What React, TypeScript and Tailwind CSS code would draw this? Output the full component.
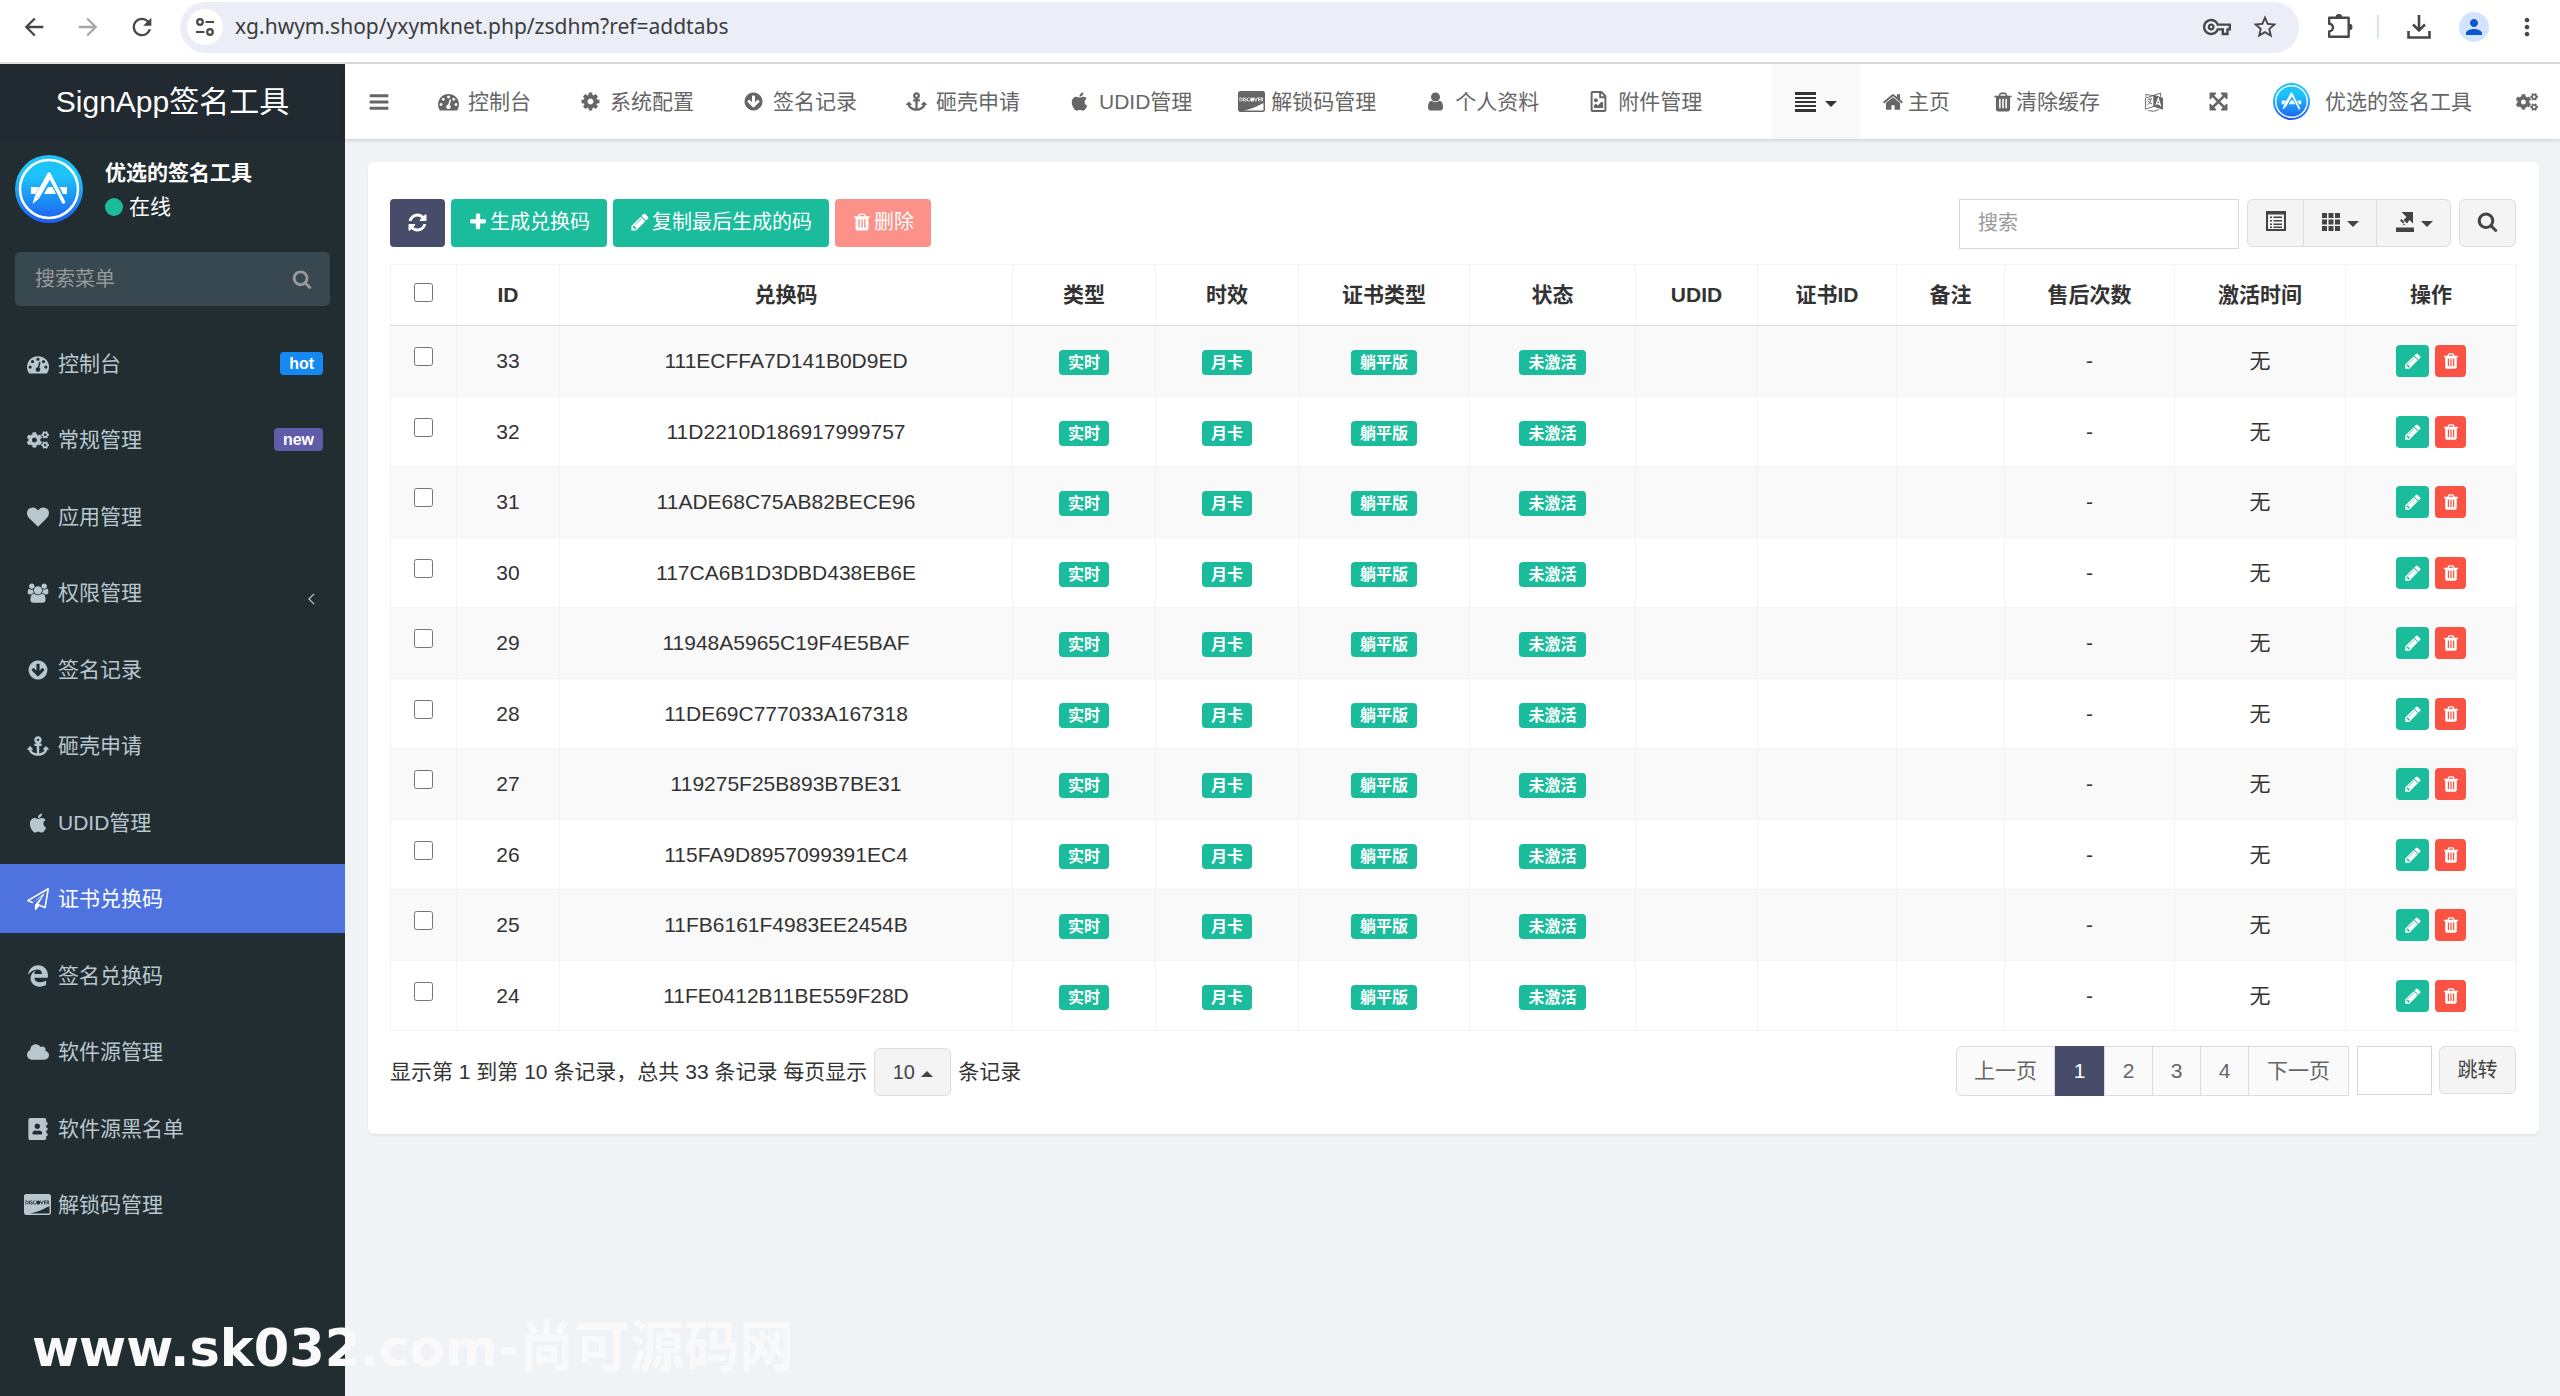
import React from 'react';
import { FaAnchor, FaApple, FaCloud, FaAddressBook, FaCcDiscover, FaRegFileImage, FaCogs } from 'react-icons/fa';
import { FaEdgeLegacy } from 'react-icons/fa6';
import { MdArrowBack, MdArrowForward, MdRefresh, MdStarBorder, MdMoreVert, MdPerson, MdOutlineVpnKey } from 'react-icons/md';

interface IconProps {
  className?: string;
}

type IconType = React.ComponentType<IconProps>;

const glyph = (path: string, viewBox = '0 0 1792 1792'): IconType => {
  const Glyph: React.FC<IconProps> = ({ className }) => (
    <svg viewBox={viewBox} fill="currentColor" className={className} aria-hidden="true">
      <path d={path} />
    </svg>
  );
  return Glyph;
};

const PencilIcon = glyph('M491 1536l91-91-235-235-91 91v107h128v128h107zm523-928q0-22-22-22-10 0-17 7l-542 542q-7 7-7 17 0 22 22 22 10 0 17-7l542-542q7-7 7-17zm-54-192l416 416-832 832h-416v-416zm683 96q0 53-37 90l-166 166-416-416 166-165q36-38 90-38 53 0 91 38l235 234q37 39 37 91z');
const TrashIcon = glyph('M704 1376v-704q0-14-9-23t-23-9h-64q-14 0-23 9t-9 23v704q0 14 9 23t23 9h64q14 0 23-9t9-23zm256 0v-704q0-14-9-23t-23-9h-64q-14 0-23 9t-9 23v704q0 14 9 23t23 9h64q14 0 23-9t9-23zm256 0v-704q0-14-9-23t-23-9h-64q-14 0-23 9t-9 23v704q0 14 9 23t23 9h64q14 0 23-9t9-23zm-544-992h448l-48-117q-7-9-17-11h-317q-10 2-17 11zm928 32v64q0 14-9 23t-23 9h-96v948q0 83-47 143.5t-113 60.5h-832q-66 0-113-58.5t-47-141.5v-952h-96q-14 0-23-9t-9-23v-64q0-14 9-23t23-9h309l70-167q15-37 54-63t79-26h320q40 0 79 26t54 63l70 167h309q14 0 23 9t9 23z');
const RefreshIcon = glyph('M1639 1056q0 5-1 7-64 268-268 434.5t-478 166.5q-146 0-282.5-55t-243.5-157l-129 129q-19 19-45 19t-45-19-19-45v-448q0-26 19-45t45-19h448q26 0 45 19t19 45-19 45l-137 137q71 66 161 102t187 36q134 0 250-65t186-179q11-17 53-117 8-23 30-23h192q13 0 22.5 9.5t9.5 22.5zm25-800v448q0 26-19 45t-45 19h-448q-26 0-45-19t-19-45 19-45l138-138q-148-137-349-137-134 0-250 65t-186 179q-11 17-53 117-8 23-30 23h-199q-13 0-22.5-9.5t-9.5-22.5v-7q65-268 270-434.5t480-166.5q146 0 284 55.5t245 156.5l130-129q19-19 45-19t45 19 19 45z');
const PlusIcon = glyph('M1600 736v192q0 40-28 68t-68 28h-416v416q0 40-28 68t-68 28h-192q-40 0-68-28t-28-68v-416h-416q-40 0-68-28t-28-68v-192q0-40 28-68t68-28h416v-416q0-40 28-68t68-28h192q40 0 68 28t28 68v416h416q40 0 68 28t28 68z');
const SearchIcon = glyph('M1216 832q0-185-131.5-316.5t-316.5-131.5-316.5 131.5-131.5 316.5 131.5 316.5 316.5 131.5 316.5-131.5 131.5-316.5zm512 832q0 52-38 90t-90 38q-54 0-90-38l-343-342q-179 124-399 124-143 0-273.5-55.5t-225-150-150-225-55.5-273.5 55.5-273.5 150-225 225-150 273.5-55.5 273.5 55.5 225 150 150 225 55.5 273.5q0 220-124 399l343 343q37 37 37 90z');
const BarsIcon = glyph('M1664 1344v128q0 26-19 45t-45 19h-1408q-26 0-45-19t-19-45v-128q0-26 19-45t45-19h1408q26 0 45 19t19 45zm0-512v128q0 26-19 45t-45 19h-1408q-26 0-45-19t-19-45v-128q0-26 19-45t45-19h1408q26 0 45 19t19 45zm0-512v128q0 26-19 45t-45 19h-1408q-26 0-45-19t-19-45v-128q0-26 19-45t45-19h1408q26 0 45 19t19 45z');
const HomeIcon = glyph('M1472 992v480q0 26-19 45t-45 19h-384v-384h-256v384h-384q-26 0-45-19t-19-45v-480q0-1 .5-3t.5-3l575-474 575 474q1 2 1 6zm223-69l-62 74q-8 9-21 11h-3q-13 0-21-7l-692-577-692 577q-12 8-24 7-13-2-21-11l-62-74q-8-10-7-23.5t11-21.5l719-599q32-26 76-26t76 26l244 204v-195q0-14 9-23t23-9h192q14 0 23 9t9 23v408l219 182q10 8 11 21.5t-7 23.5z');
const CogIcon = glyph('M1152 896q0-106-75-181t-181-75-181 75-75 181 75 181 181 75 181-75 75-181zm512-109v222q0 12-8 23t-20 13l-185 28q-19 54-39 91 35 50 107 138 10 12 10 25t-9 23q-27 37-99 108t-94 71q-12 0-26-9l-138-108q-44 23-91 38-16 136-29 186-7 28-36 28h-222q-14 0-24.5-8.5t-11.5-21.5l-28-184q-49-16-90-37l-141 107q-10 9-25 9-14 0-25-11-126-114-165-168-7-10-7-23 0-12 8-23 15-21 51-66.5t54-70.5q-27-50-41-99l-183-27q-13-2-21-12.5t-8-23.5v-222q0-12 8-23t19-13l186-28q14-46 39-92-40-57-107-138-10-12-10-24 0-10 9-23 26-36 98.5-107.5t94.5-71.5q13 0 26 10l138 107q44-23 91-38 16-136 29-186 7-28 36-28h222q14 0 24.5 8.5t11.5 21.5l28 184q49 16 90 37l142-107q9-9 24-9 13 0 25 10 129 119 165 170 7 8 7 22 0 12-8 23-15 21-51 66.5t-54 70.5q26 50 41 98l183 28q13 2 21 12.5t8 23.5z');
const DashboardIcon = glyph('M384 1152q0-53-37.5-90.5t-90.5-37.5-90.5 37.5-37.5 90.5 37.5 90.5 90.5 37.5 90.5-37.5 37.5-90.5zm192-448q0-53-37.5-90.5t-90.5-37.5-90.5 37.5-37.5 90.5 37.5 90.5 90.5 37.5 90.5-37.5 37.5-90.5zm428 481l101-382q6-26-7.5-48.5t-38.5-29.5-48 6.5-30 39.5l-101 382q-60 5-107 43.5t-63 98.5q-20 77 20 146t117 89 146-20 89-117q16-60-6-117t-72-91zm660-33q0-53-37.5-90.5t-90.5-37.5-90.5 37.5-37.5 90.5 37.5 90.5 90.5 37.5 90.5-37.5 37.5-90.5zm-640-640q0-53-37.5-90.5t-90.5-37.5-90.5 37.5-37.5 90.5 37.5 90.5 90.5 37.5 90.5-37.5 37.5-90.5zm448 192q0-53-37.5-90.5t-90.5-37.5-90.5 37.5-37.5 90.5 37.5 90.5 90.5 37.5 90.5-37.5 37.5-90.5zm320 448q0 261-141 483-19 29-54 29h-1402q-35 0-54-29-141-221-141-483 0-182 71-348t191-286 286-191 348-71 348 71 286 191 191 286 71 348z');
const HeartIcon = glyph('M896 1664q-26 0-44-18l-624-602q-10-8-27.5-26t-55.5-65.5-68-97.5-53.5-121-23.5-138q0-220 127-344t351-124q62 0 126.5 21.5t120 58 95.5 68.5 76 68q36-36 76-68t95.5-68.5 120-58 126.5-21.5q224 0 351 124t127 344q0 221-229 450l-623 600q-18 18-44 18z');
const UsersIcon = glyph('M657 896q-162 5-265 128h-134q-82 0-138-40.5t-56-118.5q0-353 124-353 6 0 43.5 21t97.5 42.5 119 21.5q67 0 133-23-5 37-5 66 0 159 90 294zm1071 637q0 120-73 189.5t-194 69.5h-874q-121 0-194-69.5t-73-189.5q0-53 3.5-103.5t14-109 26.5-108.5 43-97.5 62-81 85.5-53.5 111.5-20q10 0 43 21.5t73 48 107 48 135 21.5 135-21.5 107-48 73-48 43-21.5q61 0 111.5 20t85.5 53.5 62 81 43 97.5 26.5 108.5 14 109 3.5 103.5zm-1024-1277q0 106-75 181t-181 75-181-75-75-181 75-181 181-75 181 75 75 181zm704 384q0 159-112.5 271.5t-271.5 112.5-271.5-112.5-112.5-271.5 112.5-271.5 271.5-112.5 271.5 112.5 112.5 271.5zm576 225q0 78-56 118.5t-138 40.5h-134q-103-123-265-128 90-135 90-294 0-29-5-66 66 23 133 23 59 0 119-21.5t97.5-42.5 43.5-21q124 0 124 353zm-128-609q0 106-75 181t-181 75-181-75-75-181 75-181 181-75 181 75 75 181z', '0 0 2048 1792');
const ArrowDownIcon = glyph('M1412 897q0-27-18-45l-91-91q-18-18-45-18t-45 18l-189 189v-502q0-26-19-45t-45-19h-128q-26 0-45 19t-19 45v502l-189-189q-19-19-45-19t-45 19l-91 91q-18 18-18 45t18 45l362 362 91 91q18 18 45 18t45-18l91-91 362-362q18-18 18-45zm252-1q0 209-103 385.5t-279.5 279.5-385.5 103-385.5-103-279.5-279.5-103-385.5 103-385.5 279.5-279.5 385.5-103 385.5 103 279.5 279.5 103 385.5z');
const PlaneIcon = glyph('M1764 11q33 24 27 64l-256 1536q-5 29-32 45-14 8-31 8-11 0-24-5l-453-185-242 295q-18 23-49 23-13 0-22-4-19-7-30.5-23.5t-11.5-36.5v-349l864-1059-1069 925-395-162q-37-14-40-55-2-40 32-59l1664-960q15-9 32-9 20 0 36 11zm-342 1499l221-1323-1434 827 336 137 863-639-478 797z');
const UserIcon = glyph('M1536 1399q0 109-62.5 187t-150.5 78h-854q-88 0-150.5-78t-62.5-187q0-85 8.5-160.5t31.5-152 58.5-131 94-89 134.5-34.5q131 128 313 128t313-128q76 0 134.5 34.5t94 89 58.5 131 31.5 152 8.5 160.5zm-256-887q0 159-112.5 271.5t-271.5 112.5-271.5-112.5-112.5-271.5 112.5-271.5 271.5-112.5 271.5 112.5 112.5 271.5z');
const ExpandIcon = glyph('M1411 541l-355 355 355 355 144-144q29-31 70-14 39 17 39 59v448q0 26-19 45t-45 19h-448q-42 0-59-40-17-39 14-69l144-144-355-355-355 355 144 144q31 30 14 69-17 40-59 40h-448q-26 0-45-19t-19-45v-448q0-42 40-59 39-17 69 14l144 144 355-355-355-355-144 144q-19 19-45 19-12 0-24-5-40-17-40-59v-448q0-26 19-45t45-19h448q42 0 59 40 17 39-14 69l-144 144 355 355 355-355-144-144q-31-30-14-69 17-40 59-40h448q26 0 45 19t19 45v448q0 42-39 59-13 5-25 5-26 0-45-19z');

const LanguageIcon: IconType = ({ className }) => (
  <svg viewBox="0 0 20 21" className={className} fill="none" stroke="currentColor" aria-hidden="true">
    <path d="M10 3.500 1 6.500v11.500l9-3zM1.500 5V2.500L10 4M4 19.500q6 2 11-1" />
    <path d="M3 8.500l5-1.500M5.500 6.500v1.500M7 8q-1 4-4 5.500M4 9.500q1.500 2.500 4 3" />
    <path d="M10 3.500 19 6.500V18l-9-3z" fill="currentColor" />
    <path d="M12 13.500l2.500-6.500 2.500 8M13 12l3 1" stroke="#fff" strokeWidth="1.300" />
    <path d="M10 3.500 17 1v4" />
  </svg>
);

const AlignIcon: IconType = ({ className }) => (
  <svg viewBox="0 0 21 20" className={className} fill="currentColor" aria-hidden="true">
    <path d="M0 0h21v3H0zM0 5h21v2H0zM0 9h21v2H0zM0 13h21v2H0zM0 17h21v3H0z" />
  </svg>
);

const ListIcon: IconType = ({ className }) => (
  <svg viewBox="0 0 20 20" className={className} aria-hidden="true">
    <path d="M1 1h18v18H1z" fill="none" stroke="currentColor" strokeWidth="2" />
    <path d="M1 1h18v2.500H1zM4 5.500h2V7H4zM7.500 5.500H16V7H7.500zM4 9h2v1.500H4zM7.500 9H16v1.500H7.500zM4 12.500h2V14H4zM7.500 12.500H16V14H7.500zM4 15.500h2V17H4zM7.500 15.500H16V17H7.500z" fill="currentColor" />
  </svg>
);

const GridIcon: IconType = ({ className }) => (
  <svg viewBox="0 0 20 20" className={className} fill="currentColor" aria-hidden="true">
    <path d="M1 1h5v5H1zM7.500 1h5v5h-5zM14 1h5v5h-5zM1 7.500h5v5H1zM7.500 7.500h5v5h-5zM14 7.500h5v5h-5zM1 14h5v5H1zM7.500 14h5v5h-5zM14 14h5v5h-5z" />
  </svg>
);

const ExportIcon: IconType = ({ className }) => (
  <svg viewBox="0 0 20 20" className={className} fill="currentColor" aria-hidden="true">
    <path d="M1 15.500h18V20H1zM6.500 0H18v11.500l-3.500-3.500-2.500 3.500-3.500-3.500 3-3zM6.500 7l3 3-1.500 1.500L5 8.500zM9 11.500l1.500 1.500H8z" />
  </svg>
);

const PuzzleIcon: IconType = ({ className }) => (
  <svg viewBox="0 0 24 24" className={className} fill="none" stroke="currentColor" strokeWidth="2.200" strokeLinejoin="round" aria-hidden="true">
    <path d="M2 3.500h18v17.500H2v-5a3 3 0 0 0 0-7z" />
    <path d="M8.500 3a2.500 2.500 0 0 1 5 0zM20.500 9.500a2.500 2.500 0 0 1 0 5z" fill="currentColor" strokeWidth="1" />
  </svg>
);

const DownloadIcon: IconType = ({ className }) => (
  <svg viewBox="0 0 24 24" className={className} fill="none" stroke="currentColor" strokeWidth="2.600" aria-hidden="true">
    <path d="M12 0v15M6 9.500l6 6 6-6M1.500 16v6.500h21V16" />
  </svg>
);

const TuneIcon: IconType = ({ className }) => (
  <svg viewBox="0 0 20 20" className={className} fill="none" stroke="currentColor" strokeWidth="2.200" aria-hidden="true">
    <circle cx="5" cy="5" r="2.800" />
    <path d="M10.500 5H19M1 15h8.500" />
    <circle cx="15" cy="15" r="2.800" />
  </svg>
);

const AppLogo: IconType = ({ className }) => (
  <svg viewBox="0 0 68 68" className={className} role="img" aria-label="logo">
    <defs>
      <linearGradient id="logoFill" x1="0" y1="0" x2="0" y2="1">
        <stop offset="0.3" stopColor="#1dc4fb" />
        <stop offset="1" stopColor="#1d5cf2" />
      </linearGradient>
    </defs>
    <circle cx="34" cy="34" r="34" fill="url(#logoFill)" />
    <circle cx="34" cy="34" r="29" fill="none" stroke="#fff" strokeWidth="2.500" />
    <path d="M16 32h8.500l-4 7H16zM33 32h4.500l3.500 7H29zM44.500 32H52v7h-4z" fill="#fff" />
    <path d="M34.500 20 22 42" stroke="#fff" strokeWidth="5" />
    <path d="M19.800 41 24.200 43.500 17.500 49z" fill="#fff" />
    <path d="M34 19 48.500 47" stroke="#fff" strokeWidth="3.500" strokeLinecap="round" />
  </svg>
);

const Caret: React.FC<{ up?: boolean }> = ({ up }) => (
  <svg viewBox="0 0 12 6" className="mt-1 h-[6px] w-[12px]" fill="currentColor" aria-hidden="true">
    <path d={up ? 'M0 6 6 0l6 6z' : 'M0 0h12L6 6z'} />
  </svg>
);

const navItems: { label: string; icon: IconType; wide?: boolean }[] = [
  { label: '控制台', icon: DashboardIcon },
  { label: '系统配置', icon: CogIcon },
  { label: '签名记录', icon: ArrowDownIcon },
  { label: '砸壳申请', icon: FaAnchor },
  { label: 'UDID管理', icon: FaApple },
  { label: '解锁码管理', icon: FaCcDiscover, wide: true },
  { label: '个人资料', icon: UserIcon },
  { label: '附件管理', icon: FaRegFileImage },
];

const menuItems: { label: string; icon: IconType; wide?: boolean; badge?: string; active?: boolean; children?: boolean }[] = [
  { label: '控制台', icon: DashboardIcon, badge: 'hot' },
  { label: '常规管理', icon: FaCogs, badge: 'new' },
  { label: '应用管理', icon: HeartIcon },
  { label: '权限管理', icon: UsersIcon, children: true },
  { label: '签名记录', icon: ArrowDownIcon },
  { label: '砸壳申请', icon: FaAnchor },
  { label: 'UDID管理', icon: FaApple },
  { label: '证书兑换码', icon: PlaneIcon, active: true },
  { label: '签名兑换码', icon: FaEdgeLegacy },
  { label: '软件源管理', icon: FaCloud },
  { label: '软件源黑名单', icon: FaAddressBook },
  { label: '解锁码管理', icon: FaCcDiscover, wide: true },
];

const columns = [
  { title: 'ID', width: 'w-[103px]' },
  { title: '兑换码', width: 'w-[453px]' },
  { title: '类型', width: 'w-[143px]' },
  { title: '时效', width: 'w-[143px]' },
  { title: '证书类型', width: 'w-[171px]' },
  { title: '状态', width: 'w-[166px]' },
  { title: 'UDID', width: 'w-[122px]' },
  { title: '证书ID', width: 'w-[139px]' },
  { title: '备注', width: 'w-[108px]' },
  { title: '售后次数', width: 'w-[170px]' },
  { title: '激活时间', width: 'w-[171px]' },
  { title: '操作', width: 'w-[171px]' },
];

const rows = [
  { id: 33, code: '111ECFFA7D141B0D9ED' },
  { id: 32, code: '11D2210D186917999757' },
  { id: 31, code: '11ADE68C75AB82BECE96' },
  { id: 30, code: '117CA6B1D3DBD438EB6E' },
  { id: 29, code: '11948A5965C19F4E5BAF' },
  { id: 28, code: '11DE69C777033A167318' },
  { id: 27, code: '119275F25B893B7BE31' },
  { id: 26, code: '115FA9D8957099391EC4' },
  { id: 25, code: '11FB6161F4983EE2454B' },
  { id: 24, code: '11FE0412B11BE559F28D' },
];

const BrowserBar = () => (
  <div className="flex h-16 items-center border-b-2 border-[#e0e0e0] bg-white pb-2 text-[#474747]">
    <div className="flex w-[180px] items-center gap-[26px] pl-5">
      <button aria-label="Back"><MdArrowBack className="size-7" /></button>
      <button aria-label="Forward" className="text-[#a8a8a8]"><MdArrowForward className="size-7" /></button>
      <button aria-label="Reload"><MdRefresh className="size-7" /></button>
    </div>
    <div className="flex h-[51px] flex-1 items-center rounded-full bg-[#ebeef7] pl-[7px] pr-5">
      <button aria-label="Site information" className="flex size-9 items-center justify-center rounded-full bg-white">
        <TuneIcon className="size-5" />
      </button>
      <input
        aria-label="Address"
        className="min-w-0 flex-1 bg-transparent pl-3 font-['Noto_Sans',sans-serif] text-[21px] text-[#3c3c3c] outline-none"
        defaultValue="xg.hwym.shop/yxymknet.php/zsdhm?ref=addtabs"
      />
      <button aria-label="Passwords"><MdOutlineVpnKey className="size-7" /></button>
      <button aria-label="Bookmark" className="ml-5"><MdStarBorder className="size-7" /></button>
    </div>
    <div className="flex items-center pl-7 pr-[19px]">
      <button aria-label="Extensions"><PuzzleIcon className="size-[26px]" /></button>
      <span className="ml-6 h-6 w-[2px] bg-[#d3e3fd]" />
      <button aria-label="Downloads" className="ml-7"><DownloadIcon className="size-6" /></button>
      <button aria-label="Profile" className="ml-7 flex size-[30px] items-center justify-center rounded-full bg-[#d3e3fd] text-[#0b57d0]">
        <MdPerson className="size-6" />
      </button>
      <button aria-label="Menu" className="ml-6"><MdMoreVert className="size-7" /></button>
    </div>
  </div>
);

const Sidebar = () => (
  <aside className="w-[345px] shrink-0 bg-[#222d32] text-[21px] text-[#b8c7ce]">
    <a href="#" className="flex h-[77px] items-center justify-center bg-[#222a31] pb-[2px] text-[30px] text-white">SignApp签名工具</a>
    <div className="flex items-center gap-[22px] px-[15px] pt-3 text-white">
      <AppLogo className="size-[68px]" />
      <div className="pt-[3px] leading-[34px]">
        <p className="font-bold">优选的签名工具</p>
        <a href="#" className="flex items-center gap-[6px]">
          <span className="size-[18px] rounded-full bg-[#1abc9c]" />
          在线
        </a>
      </div>
    </div>
    <form className="mx-[15px] mt-7 flex h-[54px] items-center rounded-[5px] bg-[#374850] pl-5 pr-[18px] text-[#999]">
      <input aria-label="搜索菜单" placeholder="搜索菜单" className="min-w-0 flex-1 bg-transparent text-[20px] outline-none placeholder:text-[#999]" />
      <button type="button" aria-label="搜索"><SearchIcon className="size-5" /></button>
    </form>
    <nav className="mt-[23px]">
      {menuItems.map((item) => (
        <a
          key={item.label}
          href="#"
          className={`flex h-[69px] items-center pl-6 pr-[22px] odd:mb-[7px] even:mb-2 ${item.active ? 'bg-[#4e73df] text-white' : ''}`}
        >
          <span className="mr-[7px] flex w-[27px] justify-center">
            <item.icon className={item.wide ? 'size-[27px] shrink-0' : 'size-[22px]'} />
          </span>
          <span className="flex-1">{item.label}</span>
          {item.badge && (
            <span className={`rounded px-[9px] text-[16px] font-bold leading-[23px] text-white ${item.badge === 'hot' ? 'bg-[#1688f1]' : 'bg-[#605ca8]'}`}>
              {item.badge}
            </span>
          )}
          {item.children && (
            <svg viewBox="0 0 8 14" className="mr-2 mt-3 h-3 w-[7px]" fill="none" stroke="currentColor" strokeWidth="1.500" aria-hidden="true">
              <path d="M7 1 1 7l6 6" />
            </svg>
          )}
        </a>
      ))}
    </nav>
  </aside>
);

const TopNav = () => (
  <header className="flex h-[75px] items-stretch bg-white text-[21px] text-[#666] shadow-[0_1px_4px_rgba(0,21,41,0.18)]">
    <button aria-label="切换菜单" className="flex w-[67px] items-center justify-center"><BarsIcon className="size-[22px]" /></button>
    <nav className="flex flex-1">
      {navItems.map((item) => (
        <a key={item.label} href="#" className="flex items-center gap-[6px] px-[23px]">
          <span className="flex w-[27px] justify-center">
            <item.icon className={item.wide ? 'size-[27px] shrink-0' : 'size-[21px]'} />
          </span>
          {item.label}
        </a>
      ))}
    </nav>
    <button aria-label="标签列表" className="flex w-[88px] items-center justify-center gap-[9px] bg-[#f9f9f9] text-[#333]">
      <AlignIcon className="h-5 w-[21px]" />
      <Caret />
    </button>
    <a href="#" className="flex items-center gap-1 px-[22px]"><HomeIcon className="size-[22px]" />主页</a>
    <a href="#" className="flex items-center gap-[2px] pl-5 pr-[22px]"><TrashIcon className="size-[22px]" />清除缓存</a>
    <a href="#" aria-label="语言" className="flex items-center px-[22px]"><LanguageIcon className="size-5" /></a>
    <a href="#" aria-label="全屏" className="flex items-center px-[22px]"><ExpandIcon className="size-[21px]" /></a>
    <a href="#" className="flex items-center gap-[15px] px-[22px]"><AppLogo className="size-[37px]" />优选的签名工具</a>
    <a href="#" aria-label="设置" className="flex items-center px-[22px]"><FaCogs className="size-[22px]" /></a>
  </header>
);

const Tag: React.FC<{ children: string }> = ({ children }) => (
  <span className="mt-1 inline-block rounded bg-[#1abc9c] px-[9px] text-[16px] font-bold leading-[25px] text-white">{children}</span>
);

const Toolbar = () => (
  <div className="flex items-start justify-between text-[20px]">
    <div className="flex gap-[6px] text-white">
      <button aria-label="刷新" className="flex h-12 w-[55px] items-center justify-center rounded bg-[#464c69] pb-[2px]"><RefreshIcon className="size-[21px]" /></button>
      <button className="flex h-12 items-center rounded bg-[#1abc9c] px-[17px] pb-[2px]"><PlusIcon className="mr-[2px] size-[20px]" />生成兑换码</button>
      <button className="flex h-12 items-center rounded bg-[#1abc9c] px-[17px] pb-[2px]"><PencilIcon className="mr-[2px] size-[20px]" />复制最后生成的码</button>
      <button className="flex h-12 items-center rounded bg-[#fb9188] px-[17px] pb-[2px]"><TrashIcon className="mr-[2px] size-[20px]" />删除</button>
    </div>
    <div className="flex items-start gap-2 text-[#444]">
      <input aria-label="搜索" placeholder="搜索" className="h-[50px] w-[280px] border border-[#d2d6de] px-[18px] pb-[2px] outline-none placeholder:text-[#999]" />
      <div className="flex h-12 divide-x divide-[#ddd] rounded-md border border-[#ddd] bg-[#f4f4f4]">
        <button aria-label="切换" className="flex w-[56px] items-center justify-center pb-[4px]"><ListIcon className="size-5" /></button>
        <button aria-label="列" className="flex w-[73px] items-center justify-center gap-[6px] pb-[3px]"><GridIcon className="size-5" /><Caret /></button>
        <button aria-label="导出" className="flex w-[73px] items-center justify-center gap-[6px] pb-[3px]"><ExportIcon className="size-5" /><Caret /></button>
      </div>
      <button aria-label="普通搜索" className="flex h-12 w-[57px] items-center justify-center rounded-md border border-[#ddd] bg-[#f4f4f4] pb-[4px]"><SearchIcon className="size-[21px]" /></button>
    </div>
  </div>
);

const cell = 'border border-[#f4f4f4] p-0 text-center';

const CodeTable = () => (
  <table className="mt-[15px] w-full table-fixed border-collapse text-[21px] leading-[30px] text-[#333]">
    <thead>
      <tr className="h-[61px]">
        <th className={`${cell} w-[66px] border-b-[#ddd]`}>
          <input type="checkbox" aria-label="全选" className="mb-2 size-[19px] align-middle" />
        </th>
        {columns.map((column) => (
          <th key={column.title} className={`${cell} border-b-[#ddd] font-bold ${column.width}`}>{column.title}</th>
        ))}
      </tr>
    </thead>
    <tbody>
      {rows.map((row) => (
        <tr key={row.id} className="odd:h-[71px] odd:bg-[#f9f9f9] even:h-[70px]">
          <td className={cell}>
            <input type="checkbox" aria-label={`选择 ${row.id}`} className="mb-[10px] size-[19px] align-middle" />
          </td>
          <td className={cell}>{row.id}</td>
          <td className={cell}>{row.code}</td>
          <td className={cell}><Tag>实时</Tag></td>
          <td className={cell}><Tag>月卡</Tag></td>
          <td className={cell}><Tag>躺平版</Tag></td>
          <td className={cell}><Tag>未激活</Tag></td>
          <td className={cell} />
          <td className={cell} />
          <td className={cell} />
          <td className={cell}>-</td>
          <td className={cell}>无</td>
          <td className={cell}>
            <div className="flex justify-center gap-[6px] text-white">
              <button aria-label="编辑" className="flex h-8 w-[33px] items-center justify-center rounded bg-[#1abc9c]"><PencilIcon className="size-[18px]" /></button>
              <button aria-label="删除" className="flex h-8 w-[31px] items-center justify-center rounded bg-[#fa5343]"><TrashIcon className="size-[18px]" /></button>
            </div>
          </td>
        </tr>
      ))}
    </tbody>
  </table>
);

const Pagination = () => (
  <div className="mt-[15px] flex items-start justify-between text-[21px] text-[#333]">
    <div className="mt-[2px] flex items-center gap-[7px]">
      <span>显示第 1 到第 10 条记录，总共 33 条记录 每页显示</span>
      <button className="flex h-12 w-[77px] items-center justify-center gap-[6px] rounded-md border border-[#ddd] bg-[#f4f4f4] text-[20px] text-[#444]">
        10
        <Caret up />
      </button>
      <span>条记录</span>
    </div>
    <div className="flex items-start text-[#666]">
      <nav className="flex h-[50px] divide-x divide-[#ddd] rounded-l-md border border-[#ddd] bg-[#fafafa] leading-[48px]">
        <a href="#" className="px-[17px]">上一页</a>
        <a href="#" aria-current="page" className="-my-px w-[50px] bg-[#464c69] text-center leading-[50px] text-white">1</a>
        <a href="#" className="w-12 text-center">2</a>
        <a href="#" className="w-12 text-center">3</a>
        <a href="#" className="w-12 text-center">4</a>
        <a href="#" className="px-[18px]">下一页</a>
      </nav>
      <input aria-label="页码" className="ml-2 h-[49px] w-[75px] border border-[#d2d6de] px-2 outline-none" />
      <button className="ml-[7px] h-12 w-[77px] rounded-md border border-[#ddd] bg-[#f4f4f4] text-[20px] text-[#444]">跳转</button>
    </div>
  </div>
);

const App: React.FC = () => (
  <div className="relative flex min-h-screen flex-col bg-[#eff3f6] font-['Liberation_Sans','Noto_Sans_CJK_SC',sans-serif]">
    <BrowserBar />
    <div className="flex flex-1">
      <Sidebar />
      <div className="min-w-0 flex-1">
        <TopNav />
        <main className="ml-[23px] mr-[21px] mt-[23px] rounded-md bg-white pb-[38px] pl-[22px] pr-[23px] pt-[37px] shadow-[0_2px_2px_rgba(0,0,0,0.05)]">
          <Toolbar />
          <CodeTable />
          <Pagination />
        </main>
      </div>
    </div>
    <p className="pointer-events-none absolute bottom-2 left-8 font-['DejaVu_Sans','Noto_Sans_CJK_SC',sans-serif] text-[51px] font-bold text-[#f9f9f9]">
      www.sk032.com-<span className="text-[55px]">尚可源码网</span>
    </p>
  </div>
);

export default App;
